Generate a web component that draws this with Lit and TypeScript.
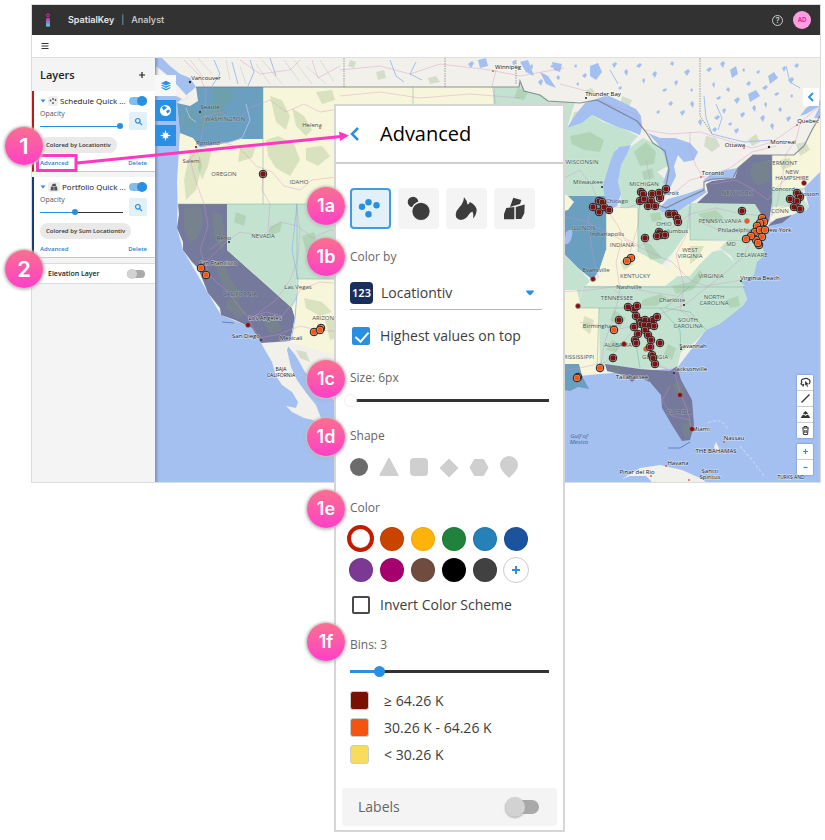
import { LitElement, html, svg, css } from "lit";
import { customElement, property } from "lit/decorators.js";
import { classMap } from "lit/directives/class-map.js";
import { styleMap } from "lit/directives/style-map.js";

type Point = [number, number];
type Place = [string, number, number, string?];

const controls = css`
  * {
    box-sizing: border-box;
  }
  button {
    font: inherit;
    color: inherit;
    border: 0;
    padding: 0;
    margin: 0;
    background: none;
    cursor: pointer;
    display: flex;
    align-items: center;
    justify-content: center;
  }
  input {
    margin: 0;
    appearance: none;
    flex: none;
  }
  .slider {
    --track: #333;
    --line: 3px;
    --thumb: 11px;
    --dot: #2a8fe0;
    display: block;
    width: 100%;
    height: 12px;
    background: linear-gradient(to right, #2a8fe0 var(--fill), var(--track) var(--fill)) center / 100% var(--line)
      no-repeat;
  }
  .slider::-webkit-slider-thumb {
    appearance: none;
    width: var(--thumb);
    height: var(--thumb);
    border-radius: 50%;
    background: var(--dot);
  }
  .switch {
    position: relative;
    width: 18px;
    height: 10px;
    display: block;
  }
  .switch::before {
    content: "";
    position: absolute;
    inset: 1px 0;
    border-radius: 8px;
    background: #a9a9a9;
  }
  .switch::after {
    content: "";
    position: absolute;
    left: 0;
    top: 0;
    width: 10px;
    height: 10px;
    border-radius: 50%;
    background: #d2d2d2;
  }
  .switch:checked::before {
    background: #85bdea;
  }
  .switch:checked::after {
    left: auto;
    right: 0;
    background: #2a8fe0;
  }
`;

/* ---------- Map ---------- */

const GREEN = "#c3e3d0";
const CREAM = "#f8f6da";
const BLUE = "#6a9fc0";
const NAVY = "#757a9c";

const regions: [string, string][] = [
  [CREAM, "M263 87H494V105H345V204H178L177 182L179 150L180 133L193 138L200 147L230 142L240 139H264Z"],
  [BLUE, "M196 87H263V139H240L230 142L214 145L200 147L193 138L180 133L177 103L190 106L198 101Z"],
  [NAVY, "M178 204H227V250L292 308L295 318L290 341L261 343L252 328L235 320L221 315L220 308L208 293L198 268L192 262L183 250V242L177 228L179 214Z"],
  [GREEN, "M227 204H345V279H297L296 300L292 308L227 250Z"],
  [CREAM, "M297 279H345V358L290 342L295 318L292 308L296 300Z"],
  [GREEN, "M494 87H519L520 83L524 91L540 95L548 101L564 102L575 102L567 128L582 123L592 115L603 122L622 128L638 136L630 145L617 148L610 162L603 185L606 196H560V110H494Z"],
  [GREEN, "M625 154L632 146L643 138L657 145L664 154L668 166L657 172L663 177L668 188L658 208H620L621 195L618 182L620 165Z"],
  [BLUE, "M560 196H606V250L600 268L593 280L578 268L560 250Z"],
  [CREAM, "M560 192L568 196L574 202L568 210L560 212Z"],
  [CREAM, "M606 208H638V250L618 262L604 276L600 268L606 250Z"],
  [GREEN, "M638 208L658 209L670 214L690 205V228L675 250L662 265L638 252Z"],
  [GREEN, "M690 203H755L761 214L759 226L752 239L690 240Z"],
  [NAVY, "M697 203L708 193L706 184L712 181L735 178L738 168L753 155H772V202L769 222L761 214L755 204Z M768 226L776 219L792 215L782 223Z"],
  [CREAM, "M772 155H794L804 148L812 132L820 118V172L810 180L804 188H772Z"],
  [GREEN, "M772 188H804L802 197L809 207L806 211L797 206L772 207Z"],
  [CREAM, "M772 207L797 206V211L785 215L770 219Z"],
  [CREAM, "M690 228V240L704 241L728 243L712 252L700 264L690 276L678 276L668 268L675 250Z"],
  [GREEN, "M728 240H752L760 239L765 255L757 262L754 275L741 282L737 268L731 256L720 248Z"],
  [CREAM, "M604 276L618 262L638 252L662 265L670 270L678 277L668 285H584L593 280Z"],
  [GREEN, "M678 276H690L700 264L712 252L722 250L736 264L741 282L745 286H665Z"],
  [GREEN, "M560 250L578 268L590 281L582 290L576 308H560Z"],
  [GREEN, "M584 286H742L747 298L744 305L720 324L706 330L695 342L681 352L677 368L640 369L606 365L600 373L599 308H576Z"],
  [CREAM, "M577 290L581 308H599V373L580 374L579 364H560V290Z"],
  [BLUE, "M560 364H579L582 376L589 389L578 387L570 391L560 389Z"],
  [NAVY, "M605 364L640 369L670 371L677 366L681 380L692 400L694 425L690 440L682 441L672 425L662 408L661 395L650 382L638 377L632 382L624 375L607 371Z"],
];

const borders = [
  "M263 87V204", "M297 204V279", "M178 204H345", "M297 279H345", "M606 196V250", "M638 208V252", "M690 203V240",
  "M599 308L597 370", "M634 308L637 350L640 368", "M576 308H665L690 286", "M660 308L680 330L681 350", "M665 308L690 312L706 330",
  "M772 155V215", "M584 287H745", "M690 240H752", "M413 87V105", "M494 87V105",
];

const forests = [
  "M186 110L192 108L196 118L190 128L184 122Z", "M212 90L225 88L236 96L226 104L222 118L212 125L208 112L214 102Z",
  "M198 112L205 108L207 125L200 132Z", "M190 152L198 149L202 165L196 190L186 200L184 180Z",
  "M200 150L212 148L208 166L202 180L198 168Z", "M240 148L256 145L252 158L238 162Z",
  "M270 96L282 100L290 116L286 130L276 122Z", "M292 108L304 116L312 130L306 136L296 126Z",
  "M266 140L278 136L294 144L300 160L290 176L276 168L268 156Z", "M306 148L322 146L330 156L318 166L306 160Z",
  "M316 92L332 90L335 100L322 104Z", "M184 208L200 206L204 222L198 236L190 244L184 228Z",
  "M212 212L222 214L226 240L222 252L214 236Z", "M214 262L224 262L230 280L242 294L238 302L224 288Z",
  "M228 298L238 302L246 314L238 318L226 308Z", "M260 316L276 318L282 330L270 334Z",
  "M236 212L246 216L244 226L234 222Z", "M270 226L282 222L280 232L268 236Z", "M302 236L314 232L318 246L306 252Z",
  "M304 298L322 302L332 312L320 316L306 308Z", "M325 320L340 318L342 336L330 340Z", "M296 350L306 352L310 362L300 358Z",
  "M570 136L590 132L604 140L600 152L584 150L572 144Z", "M574 112L586 110L580 120L570 124Z",
  "M634 152L646 142L656 152L654 164L640 166Z", "M642 172L652 168L654 178L644 180Z",
  "M706 136L716 138L720 146L712 152L704 146Z", "M622 96L632 100L628 110L620 106Z", "M586 90L592 88L596 94L588 96Z",
  "M748 140L756 134L760 142L752 146Z", "M752 164L768 160L770 180L758 186L750 176Z", "M698 214L716 210L724 218L708 224Z",
  "M640 236L652 246L662 258L650 260Z", "M650 214L660 212L662 220L652 222Z", "M690 246L704 246L698 258L690 264Z",
  "M672 286L690 282L700 270L704 276L692 290L676 294Z", "M642 300L660 294L668 298L656 306L642 306Z",
  "M614 310L626 318L620 328L610 320Z", "M612 340L622 344L616 352L606 350Z", "M668 344L676 348L672 360L664 354Z",
  "M584 316L594 320L590 334L582 328Z", "M610 366L622 368L618 374L610 371Z", "M672 384L682 382L684 396L676 392Z",
  "M682 424L692 422L690 438L684 436Z", "M780 160L790 158L792 166L782 170Z", "M796 144L806 142L810 150L800 156Z",
  "M726 300L738 296L740 306L730 308Z", "M620 262L630 258L634 264L624 270Z", "M518 88L528 92L524 100L514 98Z",
  "M350 60L356 62L354 68L348 66Z", "M376 72L384 70L386 78L378 80Z", "M428 78L436 76L440 82L430 84Z",
];

const roads = [
  "M184 60L200 76L206 92L205 118L200 144L190 160L196 182L204 204L208 226L200 250L210 276L228 292L248 318L260 340",
  "M200 118L220 112L236 122L250 108L270 100L286 112L304 104L320 112L345 108",
  "M200 146L222 142L240 148L256 166L272 172L284 186L300 190L312 180L345 176",
  "M263 174L262 190L270 204L268 230", "M206 262L226 242L240 232L262 236L280 222L298 226L312 238L330 230L345 232",
  "M210 250L224 238", "M248 318L266 312L282 316L294 302L300 290L320 282L345 284", "M260 338L280 334L300 326L318 330L345 332",
  "M296 204L300 230L298 258L290 280L276 300L252 318", "M312 60L318 78L340 66", "M240 60L260 74L290 70L300 60",
  "M340 70L380 66L410 74L440 64L490 70L520 76L564 68", "M340 96L380 92L420 98L470 94L520 98", "M496 70L492 86L496 104",
  "M560 84L590 92L608 104L636 114L644 130L670 134L700 132L726 140L752 148L772 142L784 134L798 124L820 106",
  "M560 180L580 170L592 186L598 200L606 206L626 208L660 198L678 190L690 180L706 176",
  "M690 132L690 150L696 166L704 178L712 184L736 180L754 190L768 200L778 186L790 176L806 178",
  "M706 178L730 168L752 152L776 146", "M606 208L618 226L624 238L640 246L664 234L690 214L716 208L742 214L766 216",
  "M560 216L582 220L606 232L622 240L616 262L620 290L614 316L604 344L600 372", "M594 196L588 220L592 250L598 278",
  "M624 240L650 252L672 262L690 280L706 286L730 282L742 280", "M690 206L686 236L676 254L684 286L680 310L698 322",
  "M752 236L744 256L724 274L706 288L686 304L660 314L640 324L616 330L600 326L580 322",
  "M614 290L634 304L644 322L654 340L656 364L670 370", "M640 322L622 344L606 362L580 368L564 370",
  "M656 366L674 371L680 392L688 412L692 432", "M670 386L662 400L672 416L690 420", "M560 292L590 290L620 286L650 292L676 296",
  "M700 222L724 232L748 232L764 222L780 208L796 204", "M800 124L796 140L786 154L782 180L776 208", "M646 160L650 180L640 200L638 226L630 252",
];

const waters = [
  "M567 128L576 114L585 103L597 99L607 95L622 102L636 109L641 116L642 127L640 135L630 131L618 127L606 122L592 115L582 123Z",
  "M610 162L614 152L619 147L631 145L627 154L621 165L618 182L621 194L617 206L611 209L605 200L603 185Z",
  "M648 133L660 138L675 138L690 143L698 152L694 160L684 162L678 155L674 166L676 176L670 188L663 183L668 168L664 154L657 143Z",
  "M658 209L668 199L686 194L703 188L707 192L694 201L680 210L668 215Z",
  "M703 181L712 173L726 170L738 168L735 177L718 180Z",
  "M590 66L598 63L602 72L596 80L590 76Z", "M748 94L756 90L760 96L750 102Z", "M768 76L774 72L778 78L770 84Z",
  "M478 60L486 58L488 66L480 68Z", "M520 62L528 60L534 76L526 72Z", "M540 72L548 76L556 88L546 84Z", "M552 62L562 64L560 72L554 70Z",
  "M730 70L736 66L738 74L732 78Z", "M566 232Q574 226 572 236T564 244", "M800 116L806 108L820 100V106L806 114Z",
];

const lakes: Point[] = [
  [574, 66], [582, 76], [612, 64], [624, 72], [618, 88], [636, 66], [642, 80], [652, 74], [662, 90], [670, 64], [674, 82], [684, 72],
  [690, 90], [668, 104], [680, 112], [690, 104], [656, 112], [706, 70], [712, 84], [720, 64], [716, 98], [726, 90], [722, 110], [734, 100],
  [742, 70], [746, 84], [740, 114], [752, 108], [756, 72], [762, 88], [764, 104], [760, 118], [774, 94], [778, 110], [782, 68], [788, 80],
  [790, 96], [794, 66], [786, 118], [770, 126], [728, 124], [714, 118], [530, 66], [538, 82], [550, 66], [556, 78], [512, 62], [468, 64],
  [576, 84], [712, 130], [734, 130], [698, 122],
];

const rivers = [
  "M250 60L254 72L248 86", "M214 60L220 74L212 86", "M270 58L276 76", "M232 62L238 84", "M390 60L396 76L404 82", "M416 62L410 74L422 80",
  "M704 96L706 118L712 134L744 142L772 140", "M610 70L618 84", "M786 66L790 82L800 88", "M716 104L722 118L718 130",
  "M186 108L190 118L196 122", "M200 147L214 144L230 142L242 138L250 120L246 104", "M297 204L292 250L298 280L295 318L291 341",
];

const places: Place[] = [
  ["Vancouver", 206, 80], ["Seattle", 210, 109, "soft"], ["WASHINGTON", 225, 121, "state"], ["Portland", 208, 145, "soft"], ["Salem", 191, 163, "soft"],
  ["OREGON", 224, 176, "state"], ["Helena", 312, 127, "soft"], ["IDAHO", 299, 184, "state"], ["NEVADA", 263, 238, "state"], ["Reno", 224, 240, "soft"],
  ["San Francisco", 218, 265], ["CALIFORNIA", 240, 296, "state"], ["Las Vegas", 298, 289, "soft"], ["Los Angeles", 265, 320], ["San Diego", 246, 338],
  ["Mexicali", 291, 340], ["ARIZONA", 325, 320, "state"], ["BAJA|CALIFORNIA", 281, 371, "small"], ["Winnipeg", 508, 69],
  ["Thunder Bay", 603, 96], ["Quebec", 808, 123], ["Ottawa", 735, 147], ["Montreal", 783, 144], ["Toronto", 713, 175],
  ["WISCONSIN", 582, 164, "state"], ["Milwaukee", 588, 184, "soft"], ["MICHIGAN", 644, 186, "state"], ["Detroit", 669, 195], ["Chicago", 617, 203, "soft"],
  ["VERMONT", 783, 165, "state"], ["NEW|HAMPSHIRE", 792, 174, "state"], ["Concord", 783, 191, "soft"], ["Boston", 809, 196],
  ["NEW YORK", 737, 195, "state"], ["CONN", 780, 213, "state"], ["PENNSYLVANIA", 720, 223, "state"], ["Philadelphia", 735, 232, "soft"], ["New York", 778, 232],
  ["OHIO", 664, 226, "state"], ["Columbus", 674, 233, "soft"], ["ILLINOIS", 584, 230, "state"], ["Indianapolis", 607, 236, "soft"], ["INDIANA", 622, 247, "state"],
  ["MD", 731, 246, "state"], ["DELAWARE", 752, 257, "state"], ["WEST|VIRGINIA", 690, 252, "state"], ["KENTUCKY", 635, 278, "state"],
  ["Evansville", 596, 272, "soft"], ["VIRGINIA", 711, 278, "state"], ["Virginia Beach", 760, 280], ["Nashville", 629, 289, "soft"], ["TENNESSEE", 617, 300, "state"],
  ["Charlotte", 672, 302, "soft"], ["NORTH|CAROLINA", 714, 299, "state"], ["SOUTH|CAROLINA", 688, 322, "state"],
  ["Birmingham", 600, 328, "soft"], ["ALABAMA", 618, 347, "state"], ["Savannah", 693, 348], ["GEORGIA", 655, 359, "state"], ["MISSISSIPPI", 578, 359, "state"],
  ["Jacksonville", 691, 371], ["Tallahassee", 632, 379], ["FLORIDA", 679, 414, "state"], ["Miami", 701, 431], ["Gulf of|Mexico", 579, 438, "water"],
  ["Nassau", 734, 440], ["THE BAHAMAS", 716, 453], ["Havana", 678, 465], ["Pinar del Rio", 637, 474],
  ["Sancti|Spiritus", 710, 473], ["TURKS AND", 791, 479, "small"],
];

const redRings: Point[] = [
  [263, 174], [599, 201], [593, 207], [602, 202], [599, 212], [604, 207], [609, 210], [641, 192], [643, 194], [640, 201], [644, 199],
  [652, 194], [651, 201], [660, 198], [659, 193], [666, 189], [648, 206], [655, 206], [669, 214], [674, 214], [677, 218], [678, 222],
  [659, 232], [661, 235], [665, 235], [657, 236], [645, 238], [742, 211], [797, 193], [800, 197], [790, 199], [797, 201], [794, 207],
  [800, 209], [628, 307], [634, 309], [637, 306], [636, 316], [619, 320], [634, 327], [640, 321], [645, 320], [653, 320], [657, 317],
  [641, 324], [644, 325], [649, 325], [654, 326], [645, 330], [638, 334], [635, 340], [636, 343], [648, 335], [651, 340], [650, 347],
  [660, 343], [652, 355], [653, 358], [655, 364], [613, 358],
];
const orangeRings: Point[] = [
  [201, 268], [206, 275], [321, 328], [314, 332], [320, 330], [762, 218], [764, 222], [760, 223], [757, 226], [755, 232], [760, 230],
  [765, 230], [762, 237], [756, 240], [751, 236], [746, 239], [759, 245], [758, 243], [631, 258], [627, 261], [614, 330], [600, 368],
  [578, 377], [577, 378],
];
const redDots: Point[] = [[248, 325], [804, 183], [593, 279], [578, 306], [624, 344], [680, 395], [692, 429]];
const orangeDots: Point[] = [[747, 221], [646, 349]];

@customElement("layer-map")
export class LayerMap extends LitElement {
  static styles = [
    controls,
    css`
      :host {
        position: relative;
        display: block;
        flex: 1;
        min-width: 0;
        min-height: 424px;
        background: #a3c0f0;
        box-shadow: inset 3px 0 2px #8497bd;
        font-family: "Open Sans", "Noto Sans", sans-serif;
      }
      .canvas {
        position: absolute;
        inset: 0;
        width: 100%;
        height: 100%;
        display: block;
      }
      text {
        font-size: 6px;
        font-weight: 400;
        text-anchor: middle;
        fill: #111;
        stroke: #fff;
        stroke-opacity: 0.6;
        stroke-width: 1px;
        paint-order: stroke;
      }
      .soft {
        fill: #3f4d50;
        stroke-opacity: 0.2;
      }
      .state {
        fill: #47555a;
        stroke-opacity: 0.25;
      }
      .small {
        font-size: 5px;
      }
      .water {
        fill: #3c62a2;
        font-style: italic;
        stroke-opacity: 0;
      }
      .tabs {
        position: absolute;
        left: 0;
        top: 17px;
        display: grid;
        gap: 4px;
      }
      .tab {
        width: 21px;
        height: 21px;
        background: #2a8fe0;
        color: #fff;
      }
      .tab.current {
        background: #f8f8f8;
        color: #2a8fe0;
      }
      .collapse {
        position: absolute;
        right: 1px;
        top: 30px;
        width: 16px;
        height: 18px;
        background: #fff;
        color: #2a8fe0;
      }
      .tools {
        position: absolute;
        right: 7px;
        bottom: 7px;
        display: grid;
        gap: 6px;
      }
      .group {
        background: #fff;
        display: grid;
        width: 16px;
        border-radius: 1px;
        box-shadow: 0 0 2px #5577aa;
      }
      .group button {
        height: 15px;
        color: #333;
      }
      .group button + button {
        border-top: 1px solid #ccc;
        height: 16px;
      }
      .group .zoom {
        color: #2a8fe0;
      }
    `,
  ];

  private rings(points: Point[], fill: string) {
    return points.map(
      ([x, y]) => svg`<g><circle cx=${x} cy=${y} r="3.8" fill="#cdbdbb" stroke="#1c1c1c" stroke-width="1"/><circle cx=${x} cy=${y} r="2.7" fill=${fill}/></g>`
    );
  }

  private dots(points: Point[], fill: string) {
    return points.map(([x, y]) => svg`<circle cx=${x} cy=${y} r="2.5" fill=${fill} stroke="#8d8d92" stroke-width=".6"/>`);
  }

  private placeName([name, x, y, kind]: Place) {
    const lines = name.split("|");
    return svg`<text class=${kind ?? "city"} x=${x} y=${y}>${lines.map(
      (line, i) => svg`<tspan x=${x} dy=${i ? 6 : 0}>${line}</tspan>`
    )}</text>`;
  }

  render() {
    return html`
      <svg class="canvas" viewBox="155 58 665 424" preserveAspectRatio="xMinYMin slice" role="img" aria-label="Map of layers">
        <defs>
          <linearGradient id="edge"><stop offset="0" stop-color="#6c7fa8" stop-opacity=".7" /><stop offset="1" stop-color="#6c7fa8" stop-opacity="0" /></linearGradient>
        </defs>
        <rect x="155" y="58" width="665" height="424" fill="#a3c0f0" />
        <path
          fill="#f1f0ea"
          d="M162 58H820V106L814 118L820 118V172L804 188L809 207L790 216L770 222L758 250L741 282L747 300L706 330L677 368L600 374L560 378V110H345V406L334 400L322 386L305 372L296 356L288 346L261 343L252 328L221 315L208 293L183 250L177 228L178 180L180 133L177 103L196 87L190 78L180 74L170 66Z"
        />
        <path fill="#f4f3ef" stroke="#c8d4e4" stroke-width=".5" d="M156 66L166 74L178 86L188 97L184 100L170 93L158 82L155 74Z" />
        <path
          fill="#f1f0ea"
          d="M261 343H290L287 350L291 367L297 380L307 394L316 405L321 418L320 426L313 420L304 418L292 412L286 406L296 408L298 402L292 392L282 385L276 376L272 362Z"
        />
        <path fill="#f1f0ea" d="M622 479L640 468L660 465L682 470L700 478L706 482H652L646 476L630 476Z M716 442L719 448L717 453L714 447Z" />
        <g stroke="#dfddd4" fill="none">
          <path d="M190 60L204 78M198 58L212 74M226 60L230 80M240 66L246 84M256 64L270 84M262 60L282 84M284 60L300 82M294 60L312 84M306 66L326 84M320 60L334 82" />
        </g>
        ${regions.map(([fill, d]) => svg`<path fill=${fill} d=${d}/>`)}
        <g fill="#7ba463" fill-opacity=".24">${forests.map((d) => svg`<path d=${d}/>`)}</g>
        ${waters.map((d) => svg`<path fill="#a3c0f0" d=${d}/>`)}
        <g fill="#a3c0f0">
          ${lakes.map(
            ([x, y], i) => svg`<path d=${`M${x} ${y}l${2 + (i % 3)} ${-2 - (i % 2)}l${1 + (i % 2)} ${2}l${-1 - (i % 3)} ${2 + (i % 4)}z`}/>`
          )}
        </g>
        <g fill="none" stroke="#a3c0f0" stroke-width="1">${rivers.map((d) => svg`<path d=${d}/>`)}</g>
        <g fill="none" stroke="#d78bd0" stroke-opacity=".42" stroke-width=".9">${roads.map((d) => svg`<path d=${d}/>`)}</g>
        <g fill="none" stroke="#6fb29a" stroke-opacity=".6" stroke-width=".8">${borders.map((d) => svg`<path d=${d}/>`)}</g>
        <path
          fill="none"
          stroke="#737a84"
          stroke-opacity=".8"
          stroke-width="1.2"
          d="M196 87H519L520 81L524 91L540 95L548 101L564 102L580 103L597 100L637 121L646 132L653 143L665 151L669 170L664 196L658 205L666 208L680 201L704 190V182L712 179L733 178L738 168L753 155L794 155L804 146L812 130L820 116"
        />
        <path fill="none" stroke="#888" stroke-width=".8" stroke-dasharray="1.5 1" d="M344 58V87M445 58V87M700 58V116L712 134M516 60V84" />
        <path fill="none" stroke="#5a86c8" stroke-width="1" d="M668 448L680 448L690 442M222 322L234 323" />
        <path fill="none" stroke="#c4d6f2" stroke-width="1.2" stroke-dasharray="3 2" d="M708 423Q722 416 728 430M740 446L752 460L764 476" />
        <g fill="#e0643c">
          <circle cx="493" cy="71" r="1" /><circle cx="797" cy="125" r="1" /><circle cx="744" cy="148" r="1" />
          <circle cx="701" cy="177" r="1" /><circle cx="724" cy="442" r="1" /><circle cx="666" cy="466" r="1" />
          <circle cx="651" cy="476" r="1" /><circle cx="689" cy="480" r="1" /><circle cx="320" cy="128" r="1" />
        </g>
        <g fill="#222">
          <circle cx="190" cy="82" r="1.2" /><circle cx="586" cy="98" r="1" /><circle cx="769" cy="147" r="1.2" />
          <circle cx="200" cy="112" r="1" /><circle cx="196" cy="147" r="1" /><circle cx="229" cy="242" r="1" />
          <circle cx="684" cy="305" r="1" /><circle cx="741" cy="281" r="1" /><circle cx="261" cy="340" r="1" />
          <circle cx="674" cy="373" r="1" /><circle cx="681" cy="349" r="1" /><circle cx="602" cy="187" r="1" />
        </g>
        ${places.map((place) => this.placeName(place))} ${this.dots(redDots, "#8b0d0d")} ${this.dots(orangeDots, "#f9560f")}
        ${this.rings(redRings, "#7d1010")} ${this.rings(orangeRings, "#f9560f")}
        <rect x="155" y="58" width="4" height="424" fill="url(#edge)" />
      </svg>

      <div class="tabs">
        <button class="tab current" aria-label="Layers">
          <svg width="12" height="12" viewBox="0 0 12 12" fill="currentColor">
            <path d="M6 .8L11 3.200L6 5.600L1 3.200Z" />
            <path d="M1 5.300L2.300 4.700L6 6.500L9.700 4.700L11 5.300L6 7.900Z" />
            <path d="M1 7.800L2.300 7.200L6 9L9.700 7.200L11 7.800L6 10.600Z" />
          </svg>
        </button>
        <button class="tab" aria-label="Basemap">
          <svg width="13" height="13" viewBox="0 0 13 13">
            <circle cx="6.500" cy="6.500" r="5.500" fill="#fff" />
            <path fill="#2a8fe0" d="M3 3L5 2L8 3L7 4.500L5.500 5.500L5 6.500L3.500 5ZM7 7L9 5.800L11 6L10.400 8L8.600 9.600L7.600 8.600Z" />
          </svg>
        </button>
        <button class="tab" aria-label="Points of interest">
          <svg width="13" height="13" viewBox="0 0 13 13" fill="#fff">
            <path d="M6.500 .8L7.500 4.500L9.700 3.300L8.500 5.500L12.200 6.500L8.500 7.500L9.700 9.700L7.500 8.500L6.500 12.200L5.500 8.500L3.300 9.700L4.500 7.500L.8 6.500L4.500 5.500L3.300 3.300L5.500 4.500Z" />
          </svg>
        </button>
      </div>

      <button class="collapse" aria-label="Open panel">
        <svg width="8" height="10" viewBox="0 0 8 10" fill="none" stroke="currentColor" stroke-width="1.800"><path d="M6 1L2 5L6 9" /></svg>
      </button>

      <div class="tools">
        <div class="group">
          <button aria-label="Lasso">
            <svg width="11" height="11" viewBox="0 0 11 11" fill="none" stroke="currentColor" stroke-width="1.200">
              <path d="M4 7.200Q1.400 8.600 1 6.600Q2.400 5.600 1.400 4.600Q1.200 2 4 1.800Q6.500 .8 8.500 2.200Q10.600 3.200 9.800 5.500Q9.600 7 8.600 7M3.800 7.500L2.800 9.500" />
              <path fill="currentColor" stroke="none" d="M5 4L8.500 7L7.300 7.300L8 9.500L7 9.800L6.300 7.800L5.200 8.600Z" />
            </svg>
          </button>
          <button aria-label="Measure">
            <svg width="11" height="11" viewBox="0 0 11 11" stroke="currentColor" stroke-width="1.300"><path d="M1.500 9.500L9.500 1.500" /></svg>
          </button>
          <button aria-label="Elevation">
            <svg width="11" height="11" viewBox="0 0 11 11" fill="currentColor">
              <path d="M3.600 3.800L5.500 2L7.500 3.800L8.200 5.400L6.800 4.800L5.500 5.800L4.200 4.800L2.900 5.400ZM2.400 6.200L4.100 5.800L5.500 6.900L7 5.800L8.600 6.200L10.300 9H.7Z" />
            </svg>
          </button>
          <button aria-label="Delete drawing">
            <svg width="11" height="11" viewBox="0 0 11 11" fill="none" stroke="currentColor">
              <path d="M2 3H9M4 3V1.500H7V3M3 3.500L3.400 9.500H7.600L8 3.500M4.800 5V8M6.200 5V8" />
            </svg>
          </button>
        </div>
        <div class="group">
          <button class="zoom" aria-label="Zoom in">
            <svg width="7" height="7" viewBox="0 0 7 7" stroke="currentColor" stroke-width="1.200"><path d="M1 3.500H6M3.500 1V6" /></svg>
          </button>
          <button class="zoom" aria-label="Zoom out">
            <svg width="7" height="7" viewBox="0 0 7 7" stroke="currentColor" stroke-width="1.200"><path d="M1.500 3.500H5.500" /></svg>
          </button>
        </div>
      </div>
    `;
  }
}

/* ---------- Numbered callout ---------- */

@customElement("call-out")
export class CallOut extends LitElement {
  @property() label = "";

  static styles = css`
    :host {
      display: flex;
      align-items: center;
      justify-content: center;
      width: 38px;
      height: 38px;
      border-radius: 50%;
      background: linear-gradient(#f9708f, #ff40c8);
      box-shadow: 0 0 2px 1px #c9c4c4, 0 1px 4px #aaa;
      color: #fff;
      font: 600 18px/20px Inter, sans-serif;
    }
    :host([large]) {
      font-size: 22px;
    }
  `;

  render() {
    return html`<span>${this.label}</span>`;
  }
}

/* ---------- Sidebar card ---------- */

@customElement("layer-card")
export class LayerCard extends LitElement {
  @property() name = "";
  @property() chip = "";
  @property() tone = "red";
  @property({ type: Number }) opacity = 100;

  static styles = [
    controls,
    css`
      :host {
        display: block;
        font: 6px/10px "Open Sans", "Noto Sans", sans-serif;
        color: #333;
      }
      .card {
        background: #fff;
        border-left: 2px solid #c01616;
        border-bottom: 1px solid #c8c8c8;
        padding: 4px 8px 3px 6px;
        display: grid;
        grid-template-columns: minmax(0, 1fr);
        gap: 1px;
      }
      .card.navy {
        border-left-color: #143a80;
      }
      .head {
        display: flex;
        align-items: center;
        gap: 2px;
        height: 11px;
      }
      .name {
        flex: 1;
        min-width: 0;
        font-size: 8px;
        font-weight: 500;
        color: #111;
        white-space: nowrap;
      }
      .kind {
        background: #eee;
        border-radius: 2px;
        display: flex;
      }
      .navy .kind {
        padding: 0 1px;
      }
      .body {
        display: grid;
        grid-template-columns: minmax(0, 1fr) 18px;
        gap: 6px;
        align-items: center;
        height: 26px;
        padding-top: 2px;
      }
      .body label {
        display: grid;
        font-size: 7px;
        color: #555;
      }
      .slider {
        --line: 1px;
        --thumb: 6px;
        height: 14px;
      }
      .slider.full {
        --track: #85bdea;
      }
      .find {
        width: 18px;
        height: 18px;
        background: #e2f0fa;
        border-radius: 2px;
      }
      .chip {
        justify-self: start;
        background: #e9e9e9;
        border-radius: 8px;
        line-height: 16px;
        padding: 0 6px;
        margin-top: 3px;
        font-weight: 600;
        color: #333;
      }
      .links {
        display: flex;
        justify-content: space-between;
        padding-top: 4px;
      }
      a {
        color: #1b80d0;
        font-weight: 600;
        text-decoration: none;
      }
    `,
  ];

  render() {
    const red = this.tone === "red";
    return html`
      <section class=${classMap({ card: true, navy: !red })}>
        <div class="head">
          <svg width="6" height="4" viewBox="0 0 6 4"><path fill="#2a8fe0" d="M.5 .5H5.500L3 3.500Z" /></svg>
          <span class="kind">
            <svg width="10" height="10" viewBox="0 0 10 10" fill="#555">
              ${red
                ? svg`<circle cx="5" cy="3" r=".9"/><circle cx="2.500" cy="4.500" r=".9"/><circle cx="7.500" cy="4" r=".9"/><circle cx="5" cy="7" r=".9"/>`
                : svg`<path d="M3.500 2L6.500 1.500L7.200 4H2.800ZM2 4.500H4.700V8.500H1.500ZM5.200 4.500H8L8.500 8.500H5.200Z"/>`}
            </svg>
          </span>
          <span class="name">${this.name}</span>
          <input class="switch" type="checkbox" role="switch" aria-label="Show ${this.name}" checked />
        </div>
        <div class="body">
          <label>
            Opacity
            <input
              class=${classMap({ slider: true, full: this.opacity === 100 })}
              type="range"
              .value=${String(this.opacity)}
              style=${styleMap({ "--fill": `${this.opacity}%` })}
            />
          </label>
          <button class="find" aria-label="Zoom to layer">
            <svg width="9" height="9" viewBox="0 0 9 9" fill="none" stroke="#2a8fe0" stroke-width="1.200">
              <circle cx="3.800" cy="3.800" r="2.300" /><path d="M5.600 5.600L8 8" />
            </svg>
          </button>
        </div>
        <span class="chip">${this.chip}</span>
        <div class="links"><a href="#advanced">Advanced</a><a href="#delete">Delete</a></div>
      </section>
    `;
  }
}

/* ---------- Advanced panel ---------- */

const swatches = ["#c41a00", "#c84400", "#ffb20a", "#20823c", "#2581b8", "#1c539f", "#7c3994", "#a6006f", "#6f4c3f", "#000", "#414141"];
const swatchNames = ["Red", "Orange", "Yellow", "Green", "Light blue", "Blue", "Purple", "Magenta", "Brown", "Black", "Grey"];

const legend = [
  { fill: "#7a1000", text: "≥ 64.26 K" },
  { fill: "#f45410", text: "30.26 K - 64.26 K" },
  { fill: "#fadc5c", text: "< 30.26 K" },
];

const shapes = [
  { name: "Circle", art: svg`<circle cx="10" cy="11" r="9"/>` },
  { name: "Triangle", art: svg`<path stroke-width="2" stroke-linejoin="round" d="M10 3L18.500 19H1.500Z"/>` },
  { name: "Square", art: svg`<rect x="1" y="2" width="18" height="18" rx="4"/>` },
  { name: "Diamond", art: svg`<path stroke-width="1" stroke-linejoin="round" d="M10 3L19 12L10 21L1 12Z"/>` },
  { name: "Hexagon", art: svg`<path stroke-width="1" stroke-linejoin="round" d="M5.500 3.500H14.500L19 11.500L14.500 19.500H5.500L1 11.500Z"/>` },
  { name: "Pin", art: svg`<path d="M10 0A9 9 0 0 1 19 9Q19 14 10 22Q1 14 1 9A9 9 0 0 1 10 0Z"/>` },
];

const renderers = [
  {
    name: "Points",
    art: svg`<g fill="#2a8fe0"><circle cx="7" cy="13.700" r="3.200"/><circle cx="13.500" cy="9.300" r="3.200"/><circle cx="21.500" cy="12.300" r="3.200"/><circle cx="13.500" cy="21.300" r="3.200"/></g>`,
  },
  { name: "Sized points", art: svg`<circle cx="10" cy="9" r="5.300"/><circle cx="18" cy="18.300" r="9.300" stroke="#f4f4f4" stroke-width="1.300"/>` },
  {
    name: "Heat map",
    art: svg`<path d="M13 4.300Q16.500 8 16.500 11.500Q18.500 11 18.700 9Q24 11 25.700 16.500Q25.500 22 22 25.500Q22.800 21 21.500 18.500Q19 19 17.500 22Q15 26.500 9.500 27Q4.700 26 4.700 21.500Q5 17.500 9 13.500Q12.500 10 13 4.300Z"/>`,
  },
  { name: "Areas", art: svg`<path d="M14.300 4.700L22.300 7L21 11L11 14ZM7.300 15L15.300 14V26.300H5V21ZM16.800 14L25.700 11.500L25.300 20.300L22.300 26H16.800Z"/>` },
];

@customElement("advanced-panel")
export class AdvancedPanel extends LitElement {
  static styles = [
    controls,
    css`
      :host {
        display: block;
        border: 2px solid #d6d6d4;
        background: #fff;
        color: #3d3d3d;
        font: 500 14px/20px "Open Sans", "Noto Sans", sans-serif;
        padding-bottom: 4px;
      }
      header {
        height: 58px;
        border-bottom: 2px solid #cfcfcf;
        display: flex;
        align-items: center;
        gap: 20px;
        padding-left: 14px;
      }
      h2 {
        margin: 0;
        font: 500 20px/28px "Open Sans", "Noto Sans", sans-serif;
        color: #000;
      }
      .content {
        padding: 0 14px;
      }
      section {
        position: relative;
      }
      call-out {
        position: absolute;
        left: -43px;
        top: -10px;
      }
      .caption {
        display: block;
        margin: 0;
        font: 12px/16px "Open Sans", "Noto Sans", sans-serif;
        color: #666;
      }
      .tiles {
        display: flex;
        gap: 7px;
        padding-top: 24px;
      }
      .tiles call-out {
        top: 23px;
      }
      .tile {
        width: 41px;
        height: 41px;
        border-radius: 4px;
        background: #f4f4f4;
      }
      .tile.current {
        background: #e2f0fa;
        border: 2px solid #3f9ce4;
      }
      .color-by {
        padding-top: 20px;
      }
      .color-by call-out {
        top: 9px;
      }
      .field {
        display: flex;
        align-items: center;
        gap: 8px;
        width: 192px;
        height: 34px;
        margin-top: 11px;
        border-bottom: 1px solid #b9b9b9;
      }
      .number {
        width: 23px;
        height: 22px;
        border-radius: 4px;
        background: #182f5c;
        color: #fff;
        font: 600 11px/22px "Noto Sans", sans-serif;
        text-align: center;
      }
      select {
        flex: 1;
        min-width: 0;
        appearance: none;
        border: 0;
        padding: 0;
        background: none;
        font: inherit;
        color: inherit;
      }
      .caret {
        margin-right: 7px;
        flex: none;
      }
      .check {
        display: flex;
        align-items: center;
        gap: 10px;
        height: 20px;
        margin-left: 2px;
      }
      .box {
        position: relative;
        width: 18px;
        height: 18px;
        border: 2px solid #4a4a4a;
        border-radius: 2px;
      }
      .box:checked {
        background: #2a8fe0;
        border-color: #2a8fe0;
      }
      .box:checked::after {
        content: "";
        position: absolute;
        left: 4px;
        top: 0;
        width: 6px;
        height: 11px;
        border: solid #fff;
        border-width: 0 2px 2px 0;
        transform: rotate(42deg);
      }
      .top {
        margin-top: 16px;
      }
      .size {
        margin-top: 24px;
      }
      .size .slider {
        --dot: #fff;
        width: 204px;
        margin: 8px 0 0 -5px;
      }
      .size .slider::-webkit-slider-thumb {
        box-shadow: 0 0 1px 1px #eee;
      }
      .shape,
      .color {
        margin-top: 22px;
      }
      .shapes {
        display: flex;
        gap: 10px;
        margin: 12px 0 0 -1px;
      }
      .shapes button {
        color: #cfcfcf;
        width: 20px;
      }
      .shapes .current {
        color: #6c6c6c;
      }
      .swatches {
        display: grid;
        grid-template-columns: repeat(6, 31px);
        grid-auto-rows: 31px;
        place-items: center;
        margin: 7px 0 0 -5px;
      }
      .swatch {
        width: 24px;
        height: 24px;
        border-radius: 50%;
        background: var(--swatch);
        box-shadow: inset 0 0 0 1px #0001;
      }
      .swatch:checked {
        width: 27px;
        height: 27px;
        background: #fff;
        border: 4px solid var(--swatch);
      }
      .add {
        width: 26px;
        height: 26px;
        border: 1px solid #ccc;
        border-radius: 50%;
      }
      .invert {
        margin-top: 10px;
      }
      .bins {
        margin-top: 22px;
      }
      .bins call-out {
        top: -14px;
      }
      .bins .slider {
        width: 199px;
        margin-top: 12px;
      }
      .legend {
        list-style: none;
        padding: 0;
        margin: 10px 0 0;
      }
      .legend li {
        display: flex;
        align-items: center;
        gap: 15px;
        height: 27px;
      }
      .chip {
        width: 19px;
        height: 19px;
        border: 1px solid #ccc;
        border-radius: 3px;
        background: var(--chip);
      }
      .labels {
        display: flex;
        align-items: center;
        justify-content: space-between;
        height: 38px;
        margin: 20px 6px 0;
        padding: 0 18px 0 16px;
        border-radius: 3px;
        background: #f4f4f4;
        color: #666;
      }
      .labels .switch {
        width: 34px;
        height: 20px;
      }
      .labels .switch::before {
        inset: 3px 0;
      }
      .labels .switch::after {
        width: 20px;
        height: 20px;
        box-shadow: 0 1px 2px #aaa;
      }
    `,
  ];

  render() {
    return html`
      <header>
        <button aria-label="Back">
          <svg width="10" height="16" viewBox="0 0 10 16" fill="none" stroke="#2a8fe0" stroke-width="2.500"><path d="M8 2L2 8L8 14" /></svg>
        </button>
        <h2>Advanced</h2>
      </header>
      <div class="content">
        <section class="tiles">
          <call-out label="1a"></call-out>
          ${renderers.map(
            ({ name, art }, i) => html`<button class=${classMap({ tile: true, current: i === 0 })} aria-label=${name}>
              <svg width="31" height="31" viewBox="0 0 31 31" fill="#3c3c3c">${art}</svg>
            </button>`
          )}
        </section>

        <section class="color-by">
          <call-out label="1b"></call-out>
          <label class="caption" for="metric">Color by</label>
          <div class="field">
            <span class="number">123</span>
            <select id="metric"><option>Locationtiv</option></select>
            <svg class="caret" width="10" height="6" viewBox="0 0 10 6"><path fill="#2a8fe0" d="M1 .5H9Q9 2 5 5.500Q1 2 1 .5Z" /></svg>
          </div>
          <label class="check top"><input class="box" type="checkbox" checked />Highest values on top</label>
        </section>

        <section class="size">
          <call-out label="1c"></call-out>
          <label class="caption" for="size">Size: 6px</label>
          <input id="size" class="slider" type="range" .value=${"0"} style=${styleMap({ "--fill": "0%" })} />
        </section>

        <section class="shape">
          <call-out label="1d"></call-out>
          <p class="caption">Shape</p>
          <div class="shapes">
            ${shapes.map(
              ({ name, art }, i) => html`<button class=${classMap({ current: i === 0 })} aria-label=${name}>
                <svg width="20" height="22" viewBox="0 0 20 22" fill="currentColor" stroke="currentColor" stroke-width="0">${art}</svg>
              </button>`
            )}
          </div>
        </section>

        <section class="color">
          <call-out label="1e"></call-out>
          <p class="caption">Color</p>
          <div class="swatches">
            ${swatches.map(
              (color, i) => html`<input
                class="swatch"
                type="radio"
                name="color"
                aria-label=${swatchNames[i]}
                ?checked=${i === 0}
                style=${styleMap({ "--swatch": color })}
              />`
            )}
            <button class="add" aria-label="Add color">
              <svg width="10" height="10" viewBox="0 0 10 10" stroke="#2a8fe0" stroke-width="2"><path d="M1 5H9M5 1V9" /></svg>
            </button>
          </div>
          <label class="check invert"><input class="box" type="checkbox" />Invert Color Scheme</label>
        </section>

        <section class="bins">
          <call-out label="1f"></call-out>
          <label class="caption" for="bins">Bins: 3</label>
          <input id="bins" class="slider" type="range" min="2" max="10" step="any" .value=${"3"} style=${styleMap({ "--fill": "14%" })} />
          <ul class="legend">
            ${legend.map(
              ({ fill, text }) => html`<li><span class="chip" style=${styleMap({ "--chip": fill })}></span>${text}</li>`
            )}
          </ul>
        </section>
      </div>
      <label class="labels">Labels<input class="switch" type="checkbox" role="switch" /></label>
    `;
  }
}

/* ---------- Page ---------- */

@customElement("app-root")
export class AppRoot extends LitElement {
  static styles = [
    controls,
    css`
      :host {
        display: grid;
        position: relative;
        background: #fff;
        font: 8px/12px "Open Sans", "Noto Sans", sans-serif;
        color: #222;
      }
      .window,
      advanced-panel {
        grid-area: 1 / 1;
        align-self: start;
      }
      .window {
        margin: 5px 5px 0 32px;
        box-shadow: 0 0 0 1px #dcdcdc;
      }
      advanced-panel {
        width: 231px;
        margin: 104px 0 4px 334px;
        position: relative;
      }
      .bar {
        display: flex;
        align-items: center;
        height: 30px;
        padding: 0 9px 0 12px;
        background: #323232;
        color: #e8e8e8;
        font: 600 9px/12px Inter, sans-serif;
      }
      .logo {
        margin-right: 16px;
      }
      .divider {
        margin: 0 7px;
        color: #aaa;
        font-weight: 400;
      }
      .product {
        flex: 1;
        color: #c4c4c4;
      }
      .help {
        width: 11px;
        height: 11px;
        border: 1px solid #ccc;
        border-radius: 50%;
        font-size: 8px;
        font-weight: 400;
      }
      .avatar {
        width: 18px;
        height: 18px;
        margin-left: 10px;
        border-radius: 50%;
        background: #ff9fe0;
        color: #d4149c;
        font-size: 6px;
      }
      .toolbar {
        display: flex;
        align-items: center;
        height: 23px;
        padding-left: 9px;
        border-bottom: 1px solid #e0e0e0;
      }
      .main {
        display: flex;
      }
      .side {
        width: 123px;
        background: #f4f4f4;
        display: flex;
        flex-direction: column;
        gap: 5px;
      }
      .title {
        display: flex;
        align-items: center;
        justify-content: space-between;
        height: 28px;
        padding: 6px 9px 0 8px;
      }
      h1 {
        margin: 0;
        font: 600 11px/16px "Open Sans", "Noto Sans", sans-serif;
        color: #222;
      }
      .elevation {
        display: flex;
        align-items: center;
        justify-content: space-between;
        height: 21px;
        padding: 0 10px 0 16px;
        background: #fff;
        border-top: 1px solid #ddd;
        border-bottom: 1px solid #ddd;
        font-size: 7px;
        font-weight: 600;
        color: #222;
      }
      .pointer {
        position: absolute;
        left: 0;
        top: 0;
        pointer-events: none;
      }
      .one,
      .two {
        position: absolute;
        left: 5px;
        top: 127px;
      }
      .two {
        top: 250px;
      }
    `,
  ];

  render() {
    return html`
      <div class="window">
        <div class="bar">
          <svg class="logo" width="8" height="14" viewBox="0 0 8 14">
            <defs>
              <linearGradient id="stem" x1="0" y1="0" x2="0" y2="1"><stop offset="0" stop-color="#c02a9a" /><stop offset="1" stop-color="#4fd8e8" /></linearGradient>
            </defs>
            <circle cx="4" cy="2.200" r="1.400" fill="none" stroke="#e02a9a" />
            <path fill="url(#stem)" d="M2 5H6V13.500H2Z" />
          </svg>
          <span>SpatialKey</span><span class="divider">|</span><span class="product">Analyst</span>
          <button class="help" aria-label="Help">?</button>
          <button class="avatar" aria-label="Account">AD</button>
        </div>
        <div class="toolbar">
          <button aria-label="Menu">
            <svg width="8" height="8" viewBox="0 0 8 8" stroke="#333"><path d="M.5 1.500H7.500M.5 4H7.500M.5 6.500H7.500" /></svg>
          </button>
        </div>
        <div class="main">
          <aside class="side">
            <div class="title">
              <h1>Layers</h1>
              <button aria-label="Add layer">
                <svg width="8" height="8" viewBox="0 0 8 8" stroke="#222" stroke-width="1.200"><path d="M1 4H7M4 1V7" /></svg>
              </button>
            </div>
            <layer-card name="Schedule Quick ..." chip="Colored by Locationtiv" tone="red" .opacity=${100}></layer-card>
            <layer-card name="Portfolio Quick ..." chip="Colored by Sum Locationtiv" tone="navy" .opacity=${42}></layer-card>
            <label class="elevation">Elevation Layer<input class="switch" type="checkbox" role="switch" /></label>
          </aside>
          <layer-map></layer-map>
        </div>
      </div>
      <advanced-panel></advanced-panel>
      <svg class="pointer" width="360" height="180" viewBox="0 0 360 180" fill="none" stroke="#ff38c0">
        <rect x="37.500" y="155.500" width="38.500" height="15" stroke-width="3" />
        <path stroke-width="3" d="M77 163L341 136.500" />
        <path stroke="none" fill="#ff38c0" d="M339 131.500L349 135.500L340 141Z" />
      </svg>
      <call-out class="one" label="1" large></call-out>
      <call-out class="two" label="2" large></call-out>
    `;
  }
}
